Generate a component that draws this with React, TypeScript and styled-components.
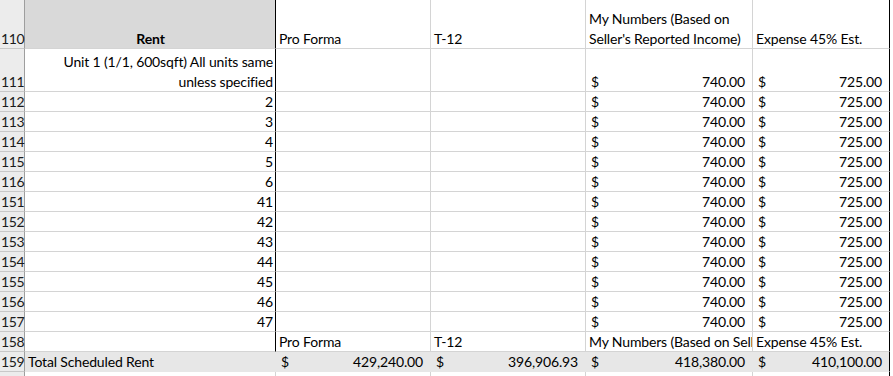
import React from "react";
import styled, { createGlobalStyle } from "styled-components";

const Global = createGlobalStyle`
  html, body { margin: 0; padding: 0; background: #ffffff; }
  body { font-family: "Lato", "Liberation Sans", sans-serif; }
`;

const GRID = "#d4d4d4";
const BLACK = "#000000";

const Sheet = styled.div`
  display: grid;
  grid-template-columns: 25px 251px 155px 155px 167px 137px 3px;
  width: 893px;
  height: 376px;
  overflow: hidden;
  font-size: 14px;
  letter-spacing: -0.15px;
  color: #000;
`;

const RowHead = styled.div<{ $h: number }>`
  height: ${(p) => p.$h}px;
  box-sizing: border-box;
  background: #ececec;
  border-right: 1px solid #9e9e9e;
  border-bottom: 1px solid #c8c8c8;
  display: flex;
  align-items: flex-end;
  padding: 0 0 0 1px;
  line-height: 18px;
  letter-spacing: -0.4px;
  color: #1a1a1a;
  white-space: nowrap;
`;

type Edge = "grid" | "black" | "none";

const edgeColor = (e: Edge | undefined, fill?: string) =>
  e === "black" ? BLACK : e === "none" ? fill || "#fff" : GRID;

const Cell = styled.div<{
  $h: number;
  $right?: Edge;
  $bottom?: Edge;
  $fill?: string;
  $align?: "left" | "right" | "center";
  $bold?: boolean;
}>`
  height: ${(p) => p.$h}px;
  box-sizing: border-box;
  background: ${(p) => p.$fill || "#ffffff"};
  border-right: 1px solid ${(p) => edgeColor(p.$right, p.$fill)};
  border-bottom: 1px solid ${(p) => edgeColor(p.$bottom, p.$fill)};
  display: flex;
  flex-direction: column;
  justify-content: flex-end;
  align-items: ${(p) =>
    p.$align === "right" ? "flex-end" : p.$align === "center" ? "center" : "flex-start"};
  text-align: ${(p) => p.$align || "left"};
  padding: 0 2px 0 3px;
  line-height: 18px;
  font-weight: ${(p) => (p.$bold ? 700 : 400)};
  white-space: nowrap;
  overflow: hidden;
`;

const Line = styled.span`
  display: block;
  & + & {
    margin-top: 2px;
  }
`;

const Money = styled.div<{ $h: number; $right?: Edge; $fill?: string; $bottom?: Edge }>`
  height: ${(p) => p.$h}px;
  box-sizing: border-box;
  background: ${(p) => p.$fill || "#ffffff"};
  border-right: 1px solid ${(p) => edgeColor(p.$right, p.$fill)};
  border-bottom: 1px solid ${(p) => edgeColor(p.$bottom, p.$fill)};
  display: flex;
  align-items: flex-end;
  justify-content: space-between;
  padding: 0 7px 0 5px;
  line-height: 18px;
  white-space: nowrap;
`;

const Filler = styled.div<{ $h: number }>`
  height: ${(p) => p.$h}px;
  background: #fff;
`;

type Align = "left" | "right" | "center";
type Val = string | string[];

type Row = {
  n: number | "";
  h: number;
  rent?: string[];
  rentAlign?: Align;
  rentBold?: boolean;
  rentFill?: string;
  rentBlack?: boolean;
  pro?: Val;
  t12?: Val;
  mine?: Val;
  exp?: Val;
  fill?: string;
};

const unitRow = (n: number, label: string): Row => ({
  n,
  h: 20,
  rent: [label],
  rentAlign: "right",
  rentBlack: true,
  mine: ["$", "740.00"],
  exp: ["$", "725.00"],
});

const rows: Row[] = [
  {
    n: 110,
    h: 49,
    rent: ["Rent"],
    rentAlign: "center",
    rentBold: true,
    rentFill: "#d9d9d9",
    rentBlack: true,
    pro: "Pro Forma",
    t12: "T-12",
    mine: ["My Numbers (Based on", "Seller's Reported Income)"],
    exp: "Expense 45% Est.",
  },
  {
    n: 111,
    h: 43,
    rent: ["Unit 1 (1/1, 600sqft) All units same", "unless specified"],
    rentAlign: "right",
    rentBlack: true,
    mine: ["$", "740.00"],
    exp: ["$", "725.00"],
  },
  unitRow(112, "2"),
  unitRow(113, "3"),
  unitRow(114, "4"),
  unitRow(115, "5"),
  unitRow(116, "6"),
  unitRow(151, "41"),
  unitRow(152, "42"),
  unitRow(153, "43"),
  unitRow(154, "44"),
  unitRow(155, "45"),
  unitRow(156, "46"),
  unitRow(157, "47"),
  {
    n: 158,
    h: 20,
    rent: [""],
    rentBlack: true,
    pro: "Pro Forma",
    t12: "T-12",
    mine: ["My Numbers (Based on Seller's Reported Income)"],
    exp: "Expense 45% Est.",
  },
  {
    n: 159,
    h: 20,
    rent: ["Total Scheduled Rent"],
    rentAlign: "left",
    fill: "#e7e7e7",
    pro: ["$", "429,240.00"],
    t12: ["$", "396,906.93"],
    mine: ["$", "418,380.00"],
    exp: ["$", "410,100.00"],
  },
  { n: "", h: 20 },
];

const isMoney = (v: unknown): v is [string, string] =>
  Array.isArray(v) && v.length === 2 && v[0] === "$";

function ValueCell({ v, h, right, fill }: { v?: Val; h: number; right?: Edge; fill?: string }) {
  const bottom: Edge = fill ? "none" : "grid";
  if (isMoney(v)) {
    return (
      <Money $h={h} $right={right} $fill={fill} $bottom={bottom}>
        <span>{v[0]}</span>
        <span>{v[1]}</span>
      </Money>
    );
  }
  const lines = v === undefined ? [] : Array.isArray(v) ? v : [v];
  return (
    <Cell $h={h} $right={right} $fill={fill} $bottom={bottom}>
      {lines.map((l, i) => (
        <Line key={i}>{l}</Line>
      ))}
    </Cell>
  );
}

export default function App() {
  return (
    <>
      <Global />
      <Sheet>
        {rows.map((r, idx) => {
          const fillRight: Edge | undefined = r.fill ? "none" : undefined;
          return (
            <React.Fragment key={idx}>
              <RowHead $h={r.h}>{r.n}</RowHead>
              <Cell
                $h={r.h}
                $right={r.rentBlack ? "black" : r.fill ? "none" : "grid"}
                $bottom={r.fill ? "none" : "grid"}
                $fill={r.rentFill || r.fill}
                $align={r.rentAlign}
                $bold={r.rentBold}
              >
                {(r.rent || []).map((l, i) => (
                  <Line key={i}>{l}</Line>
                ))}
              </Cell>
              <ValueCell v={r.pro} h={r.h} right={fillRight} fill={r.fill} />
              <ValueCell v={r.t12} h={r.h} right={fillRight} fill={r.fill} />
              <ValueCell v={r.mine} h={r.h} right={fillRight} fill={r.fill} />
              <ValueCell v={r.exp} h={r.h} right="black" fill={r.fill} />
              <Filler $h={r.h} />
            </React.Fragment>
          );
        })}
      </Sheet>
    </>
  );
}
